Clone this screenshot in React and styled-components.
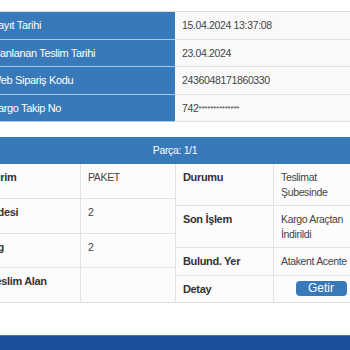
import React from 'react';
import styled, { createGlobalStyle } from 'styled-components';

const GlobalStyle = createGlobalStyle`
    html, body {
        margin: 0;
        padding: 0;
        overflow: hidden;
        background: #ffffff;
        font-family: "Liberation Sans", Arial, sans-serif;
    }
`;

const BLUE = '#3779b9';

const Page = styled.div`
    width: 384px;
    margin-left: -17px;
    padding-top: 11px;
    letter-spacing: -0.35px;
`;

const InfoTable = styled.div`
    display: grid;
    grid-template-columns: 192px 192px;
    border-top: 1px solid #dcdcdc;
`;

const InfoLabel = styled.div`
    background: ${BLUE};
    color: #ffffff;
    font-size: 11px;
    height: 26.5px;
    line-height: 26.5px;
    padding: 0 8px;
    border-bottom: 1.5px solid #a9c7e6;
`;

const InfoValue = styled.div`
    background: #f9f9f9;
    color: #444;
    font-size: 10.5px;
    height: 26.5px;
    line-height: 26.5px;
    padding: 0 7px;
    border-bottom: 1.5px solid #e2e2e2;
`;

const Masked = styled.span`
    font-size: 8px;
    letter-spacing: -0.2px;
    vertical-align: 1px;
`;

const PartHeader = styled.div`
    margin-top: 15px;
    height: 27px;
    line-height: 27px;
    background: ${BLUE};
    color: #ffffff;
    font-size: 10.5px;
    text-align: center;
`;

const PartBody = styled.div`
    display: flex;
    align-items: stretch;
`;

const Panel = styled.div`
    width: 192px;
    display: grid;
    grid-template-columns: 97px 95px;
    grid-auto-rows: ${({ $stretch }) => ($stretch ? '1fr' : 'auto')};
    border-left: ${({ $divider }) => ($divider ? '1px solid #e2e2e2' : 'none')};
    box-sizing: border-box;
`;

const Cell = styled.div`
    padding: 6px 7px;
    line-height: 14.5px;
    background: #fcfcfc;
    border-bottom: 1px solid #e2e2e2;
    border-left: ${({ $first }) => ($first ? 'none' : '1px solid #e2e2e2')};
    color: #444;
    font-size: 10.5px;
`;

const LabelCell = styled(Cell)`
    color: #333;
    font-size: 11px;
    font-weight: bold;
`;

const ButtonCell = styled(Cell)`
    display: flex;
    justify-content: center;
    align-items: center;
    padding: 5px 7px;
`;

const FetchButton = styled.button`
    width: 51px;
    height: 15px;
    padding: 0;
    border: none;
    border-radius: 4px;
    background: ${BLUE};
    color: #ffffff;
    font-family: "Liberation Sans", Arial, sans-serif;
    font-size: 12px;
    line-height: 15px;
    cursor: pointer;
`;

const BottomBar = styled.div`
    margin-top: 32px;
    height: 20px;
    background: #1b4e9b;
    border-top: 1px solid #4a74b3;
`;

const info = [
    ['Kayıt Tarihi', '15.04.2024 13:37:08'],
    ['Planlanan Teslim Tarihi', '23.04.2024'],
    ['Web Sipariş Kodu', '2436048171860330'],
    ['Kargo Takip No', <>742<Masked>**************</Masked></>],
];

const leftRows = [
    ['Birim', 'PAKET'],
    ['Adesi', '2'],
    ['Kg', '2'],
    ['Teslim Alan', ''],
];

const rightRows = [
    ['Durumu', <>Teslimat<br />Şubesinde</>],
    ['Son İşlem', <>Kargo Araçtan<br />İndirildi</>],
    ['Bulund. Yer', 'Atakent Acente'],
];

const App = () => (
    <>
        <GlobalStyle />
        <Page>
            <InfoTable>
                {info.map(([label, value]) => (
                    <React.Fragment key={label}>
                        <InfoLabel>{label}</InfoLabel>
                        <InfoValue>{value}</InfoValue>
                    </React.Fragment>
                ))}
            </InfoTable>

            <PartHeader>Parça: 1/1</PartHeader>
            <PartBody>
                <Panel $stretch>
                    {leftRows.map(([label, value]) => (
                        <React.Fragment key={label}>
                            <LabelCell $first>{label}</LabelCell>
                            <Cell>{value}</Cell>
                        </React.Fragment>
                    ))}
                </Panel>
                <Panel $divider>
                    {rightRows.map(([label, value]) => (
                        <React.Fragment key={label}>
                            <LabelCell $first>{label}</LabelCell>
                            <Cell>{value}</Cell>
                        </React.Fragment>
                    ))}
                    <LabelCell $first>Detay</LabelCell>
                    <ButtonCell>
                        <FetchButton>Getir</FetchButton>
                    </ButtonCell>
                </Panel>
            </PartBody>

            <BottomBar />
        </Page>
    </>
);

export default App;
